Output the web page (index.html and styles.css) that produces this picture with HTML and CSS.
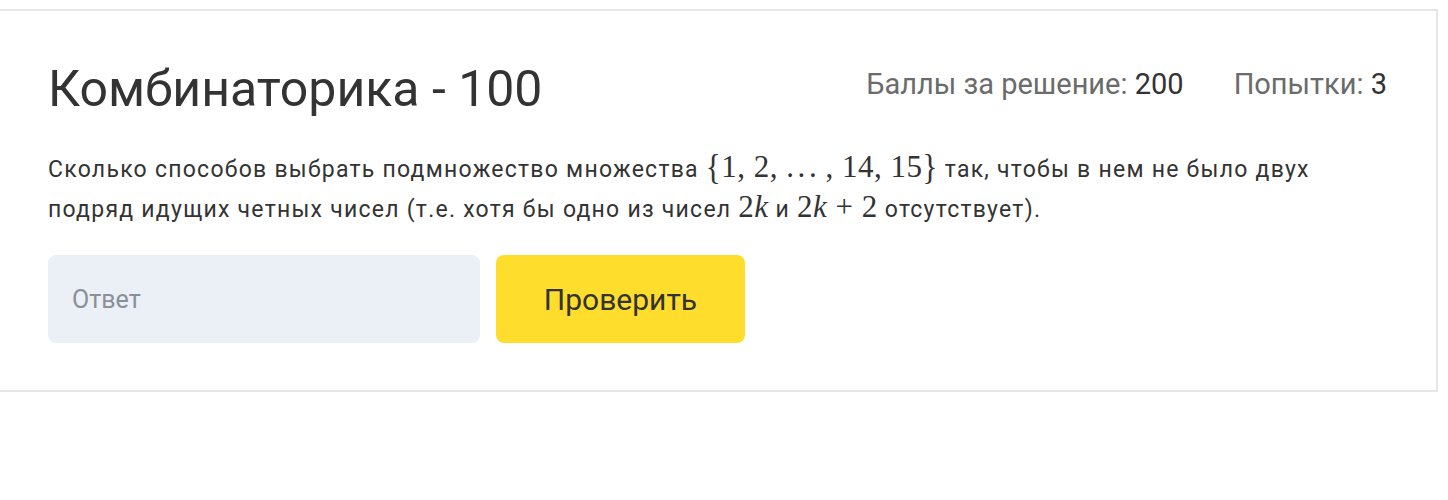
FILE: index.html
```html
<!DOCTYPE html>
<html lang="ru">
<head>
<meta charset="utf-8">
<title>Комбинаторика - 100</title>
<link rel="stylesheet" href="styles.css">
</head>
<body>
<section class="task-card">
  <header class="task-head">
    <h1 class="task-title">Комбинаторика - 100</h1>
    <div class="task-meta">
      <span class="meta-item">Баллы за решение: <b class="meta-val">200</b></span>
      <span class="meta-item">Попытки: <b class="meta-val">3</b></span>
    </div>
  </header>
  <p class="task-text">Сколько способов выбрать подмножество множества <span class="math"><span class="br">{</span>1, 2, .&#8202;.&#8202;. , 14, 15<span class="br">}</span></span> так, чтобы в нем не было двух<br>подряд идущих четных чисел (т.е. хотя бы одно из чисел <span class="math">2<i>k</i></span> и <span class="math">2<i>k</i> + 2</span> отсутствует).</p>
  <form class="task-form">
    <input class="answer" type="text" placeholder="Ответ">
    <button class="check" type="button">Проверить</button>
  </form>
</section>
</body>
</html>
```

FILE: styles.css
```css
html, body {
  margin: 0;
  padding: 0;
  background: #ffffff;
}

body {
  font-family: Roboto, "Liberation Sans", sans-serif;
  color: #333333;
}

.task-card {
  box-sizing: border-box;
  width: 1440px;
  margin: 9px 0 0 -2px;
  border: 2px solid #e6e6e6;
  padding: 46px 49px 47px 48px;
}

.task-head {
  display: flex;
  justify-content: space-between;
  align-items: center;
}

.task-title {
  margin: 0;
  font-weight: 400;
  font-size: 50px;
  line-height: 64px;
  letter-spacing: 0;
  color: #333333;
}

.task-meta {
  display: flex;
  gap: 50px;
  font-size: 29px;
  line-height: 36px;
  color: #6b6b6b;
  margin-top: -10px;
}

.meta-val {
  font-weight: 400;
  color: #333333;
}

.task-text {
  margin: 29px 0 0;
  font-size: 23px;
  line-height: 40px;
  letter-spacing: 1.25px;
  color: #333333;
}

.math {
  font-family: "Liberation Serif", "DejaVu Serif", serif;
  font-size: 31px;
  line-height: 1;
  letter-spacing: 0.5px;
}

.math i {
  font-style: italic;
}

.br {
  display: inline-block;
  transform: scaleY(1.15);
}

.task-form {
  display: flex;
  gap: 16px;
  margin-top: 25px;
}

.answer {
  box-sizing: border-box;
  width: 432px;
  height: 88px;
  border: none;
  border-radius: 8px;
  background: #ebeff6;
  padding: 0 24px;
  font-family: Roboto, "Liberation Sans", sans-serif;
  font-size: 25px;
  color: #333333;
  outline: none;
}

.answer::placeholder {
  color: #8a8f98;
}

.check {
  width: 249px;
  height: 88px;
  border: none;
  border-radius: 8px;
  background: #ffdd2d;
  font-family: Roboto, "Liberation Sans", sans-serif;
  font-size: 30px;
  color: #333333;
  cursor: pointer;
}
```
